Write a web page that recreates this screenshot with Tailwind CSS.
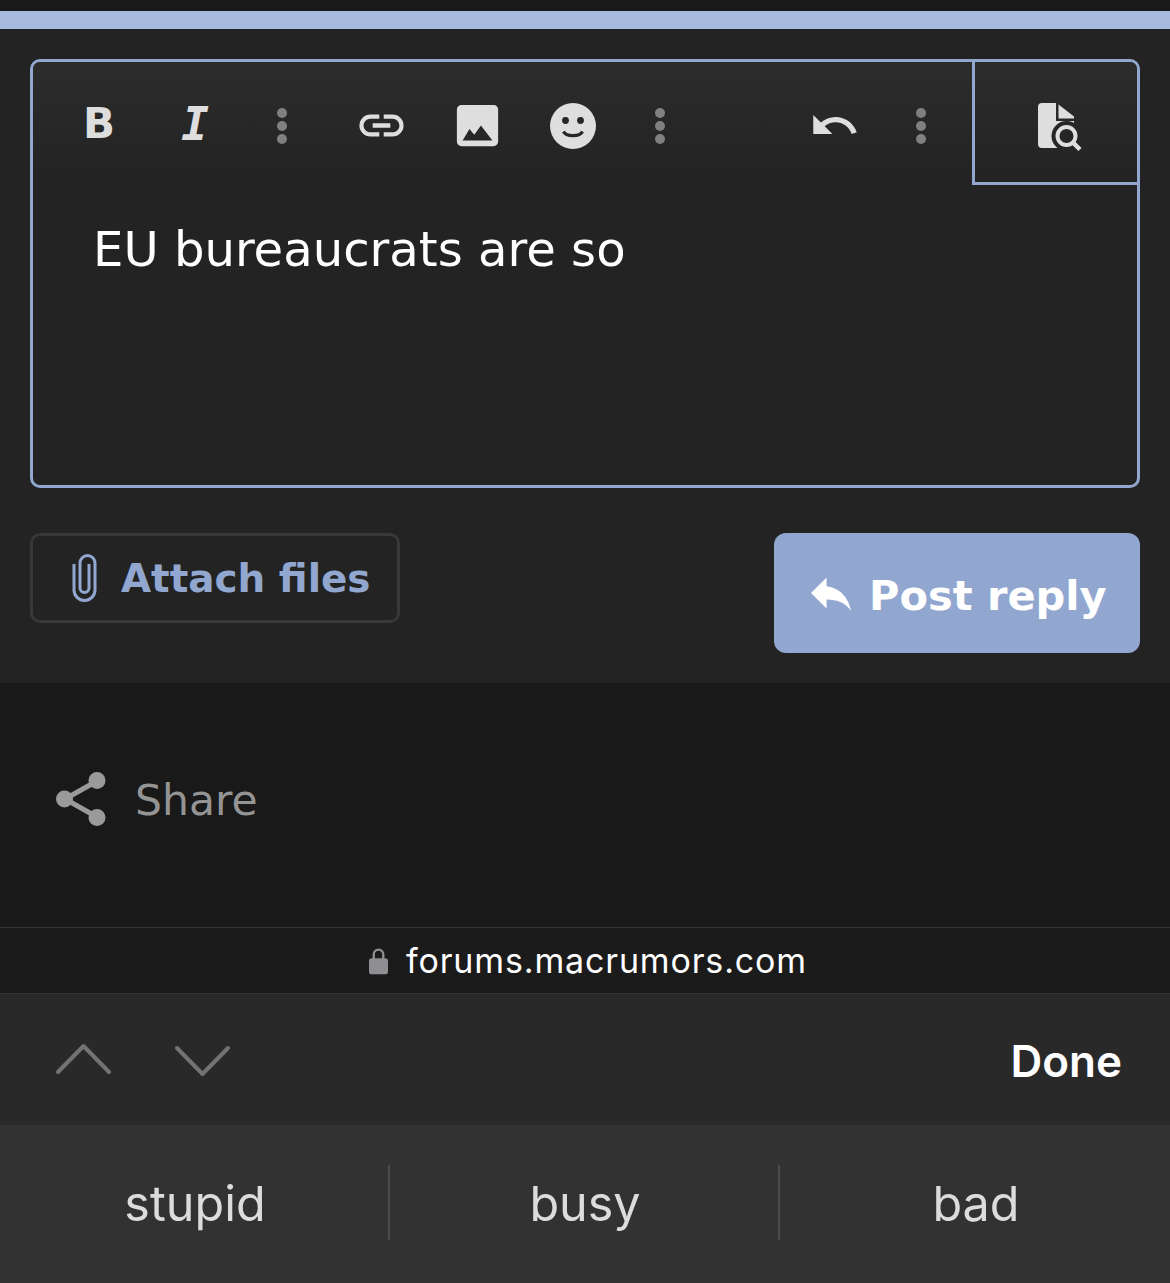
<!DOCTYPE html>
<html lang="en">
<head>
  <meta charset="UTF-8">
  <meta name="viewport" content="width=device-width, initial-scale=1.0">
  <title>Post reply</title>
  <script src="https://cdn.jsdelivr.net/npm/@tailwindcss/browser@4"></script>
</head>
<body class="bg-[#191919]">
  <div class="w-[1170px] h-[1283px] overflow-hidden flex flex-col font-['DejaVu_Sans',sans-serif]">
    <!-- Top strip -->
    <div class="h-[11px] bg-[#191919]"></div>
    <div class="h-[18px] bg-[#a6bbdd]"></div>

    <!-- Reply panel -->
    <section class="h-[654px] bg-[#232323] px-[30px] pt-[30px]">
      <!-- Editor -->
      <div class="h-[429px] border-[3px] border-[#92a7d0] rounded-[10px] overflow-hidden">
        <div class="h-[123px] flex items-stretch bg-gradient-to-b from-[#2c2c2c] to-[#232323]">
          <div class="flex-1 flex items-center pl-[18px] pt-[4px]">
            <button class="w-[96px] h-[40px] pb-[3px] flex items-center justify-center font-bold text-[42px] leading-none text-[#dedede]">B</button>
            <button class="w-[96px] h-[40px] pb-[3px] flex items-center justify-center font-['DejaVu_Sans_Mono',monospace] font-bold italic text-[46px] leading-none text-[#dedede]">I</button>
            <span class="w-[78px] flex flex-col items-center gap-[3px]">
              <i class="size-[10px] rounded-full bg-[#808080]"></i><i class="size-[10px] rounded-full bg-[#808080]"></i><i class="size-[10px] rounded-full bg-[#808080]"></i>
            </span>
            <button class="ml-[12px] w-[96px] flex justify-center">
              <svg class="w-[53px] h-[53px] fill-[#dedede]" viewBox="0 0 24 24"><path d="M3.9,12C3.9,10.29 5.29,8.9 7,8.9H11V7H7A5,5 0 0,0 2,12A5,5 0 0,0 7,17H11V15.1H7C5.29,15.1 3.9,13.71 3.9,12M8,13H16V11H8V13M17,7H13V8.9H17C18.71,8.9 20.1,10.29 20.1,12C20.1,13.71 18.71,15.1 17,15.1H13V17H17A5,5 0 0,0 22,12A5,5 0 0,0 17,7Z"/></svg>
            </button>
            <button class="w-[96px] flex justify-center">
              <svg class="w-[55px] h-[55px] fill-[#dedede]" viewBox="0 0 24 24"><path d="M21,19V5C21,3.89 20.1,3 19,3H5A2,2 0 0,0 3,5V19A2,2 0 0,0 5,21H19A2,2 0 0,0 21,19M8.5,13.5L10.6,16L13.5,12L18.5,18.5H5.5L8.5,13.5Z"/></svg>
            </button>
            <button class="w-[96px] flex justify-center">
              <svg class="w-[46px] h-[46px]" viewBox="0 0 46 46"><circle cx="23" cy="23" r="23" fill="#dedede"/><circle cx="15.5" cy="17.5" r="3.4" fill="#262626"/><circle cx="30.5" cy="17.5" r="3.4" fill="#262626"/><path d="M13.5 28.5c2.5 5.5 16.500 5.500 19 0" fill="none" stroke="#262626" stroke-width="3.200"/></svg>
            </button>
            <span class="w-[78px] flex flex-col items-center gap-[3px]">
              <i class="size-[10px] rounded-full bg-[#808080]"></i><i class="size-[10px] rounded-full bg-[#808080]"></i><i class="size-[10px] rounded-full bg-[#808080]"></i>
            </span>
            <button class="ml-auto w-[96px] flex justify-center">
              <svg class="w-[51px] h-[51px] fill-[#dedede]" viewBox="0 0 24 24"><path d="M12.5,8C9.85,8 7.45,9 5.6,10.6L2,7V16H11L7.38,12.38C8.77,11.22 10.54,10.5 12.5,10.5C16.04,10.5 19.05,12.81 20.1,16L22.47,15.22C21.08,11.03 17.15,8 12.5,8Z"/></svg>
            </button>
            <span class="w-[78px] mr-[12px] flex flex-col items-center gap-[3px]">
              <i class="size-[10px] rounded-full bg-[#808080]"></i><i class="size-[10px] rounded-full bg-[#808080]"></i><i class="size-[10px] rounded-full bg-[#808080]"></i>
            </span>
          </div>
          <!-- Preview toggle -->
          <button class="w-[165px] border-l-[3px] border-b-[3px] border-[#92a7d0] flex items-center justify-center pl-[8px] pt-[10px]">
            <svg class="w-[48px] h-[52px]" viewBox="0 0 48 52">
              <path d="M6 2H20V20H38V47H6a4 4 0 0 1-4-4V6a4 4 0 0 1 4-4Z" fill="#dedede"/>
              <path d="M22.500 3.500L38 15.500V17.500H22.500Z" fill="#dedede"/>
              <circle cx="30.500" cy="35" r="15" fill="#262626"/>
              <circle cx="30.500" cy="35" r="9" fill="none" stroke="#dedede" stroke-width="4"/>
              <path d="M37 41.500L44 48.500" stroke="#dedede" stroke-width="4.500"/>
            </svg>
          </button>
        </div>
        <p class="pl-[60px] pt-[30px] text-[48.1px] leading-[68px] text-white">EU bureaucrats are so</p>
      </div>

      <!-- Actions -->
      <div class="mt-[45px] flex justify-between items-start">
        <button class="w-[370px] h-[90px] border-[3px] border-[#383838] rounded-[10px] flex items-center pl-[38px] gap-[22px] text-[38.9px] font-bold text-[#92a7d0]">
          <svg class="w-[28px] h-[52px] shrink-0" viewBox="0 0 28 52" fill="none" stroke="#92a7d0" stroke-width="3"><path d="M18 12V36a4.500 4.500 0 0 1-9 0V11a7.500 7.500 0 0 1 15 0V38a10.500 10.500 0 0 1-21 0V12"/></svg>
          <span class="pt-[2px]">Attach files</span>
        </button>
        <button class="w-[366px] h-[120px] bg-[#92a7d0] rounded-[12px] flex items-center pl-[37px] gap-[18px] text-[41.500px] font-bold text-white">
          <svg class="w-[40px] h-[40px] shrink-0 fill-white" viewBox="3 3 18 18"><path d="M10,9V5L3,12L10,19V14.9C15,14.9 18.5,16.5 21,20C20,15 17,10 10,9Z"/></svg>
          <span class="pt-[7px]">Post reply</span>
        </button>
      </div>
    </section>

    <!-- Share -->
    <section class="h-[244px] bg-[#191919] flex items-center pl-[56px] pb-[12px] gap-[29px] text-[42.500px] text-[#949494]">
      <svg class="w-[50px] h-[54px]" viewBox="0 0 50 54"><path d="M41 9L9 27L41 45" fill="none" stroke="#9a9a9a" stroke-width="5"/><circle cx="41" cy="8.500" r="8.500" fill="#9a9a9a"/><circle cx="8.500" cy="27" r="8.500" fill="#9a9a9a"/><circle cx="41" cy="45.500" r="8.500" fill="#9a9a9a"/></svg>
      <span class="pt-[4px]">Share</span>
    </section>

    <!-- Safari address strip -->
    <div class="h-[67px] bg-[#1b1b1b] border-t border-b border-[#343434] flex items-center justify-center gap-[18px] pl-[6px] font-['Inter',sans-serif] text-[34px] tracking-[0.85px] text-white">
      <svg class="w-[19px] h-[28px]" viewBox="0 0 20 28"><path d="M5 12V7a5 5 0 0 1 10 0V12" fill="none" stroke="#8e8e93" stroke-width="2.500"/><rect y="11" width="20" height="17" rx="3" fill="#8e8e93"/></svg>
      forums.macrumors.com
    </div>

    <!-- Keyboard accessory -->
    <div class="h-[131px] bg-[#292929] flex items-center justify-between pl-[56px] pr-[48px] font-['Inter',sans-serif]">
      <div class="flex items-start gap-[64px]">
        <svg class="w-[55px] h-[32px]" viewBox="0 0 55 32" fill="none" stroke="#737373" stroke-width="4" stroke-linecap="round" stroke-linejoin="round"><path d="M2 29L27.500 3L53 29"/></svg>
        <svg class="w-[55px] h-[32px] mt-[2px]" viewBox="0 0 55 32" fill="none" stroke="#737373" stroke-width="4" stroke-linecap="round" stroke-linejoin="round"><path d="M2 3L27.500 29L53 3"/></svg>
      </div>
      <span class="pt-[3px] text-[44px] font-semibold text-white">Done</span>
    </div>

    <!-- Suggestions -->
    <div class="h-[158px] bg-[#323232] flex items-center pb-[3px] font-['Inter',sans-serif] text-[48.500px] text-[#dcdcdc]">
      <span class="w-[388px] pl-[2px] pt-[4px] text-center">stupid</span>
      <span class="w-[2px] h-[75px] bg-[#4c4c4c]"></span>
      <span class="w-[388px] pl-[2px] pt-[4px] text-center">busy</span>
      <span class="w-[2px] h-[75px] bg-[#4c4c4c]"></span>
      <span class="flex-1 pl-[2px] pt-[4px] text-center">bad</span>
    </div>
  </div>
</body>
</html>
